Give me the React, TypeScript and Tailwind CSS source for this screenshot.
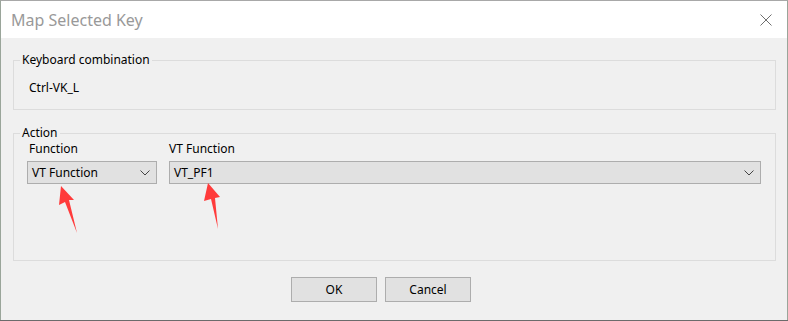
import React from "react";

const FONT = { fontFamily: '"Noto Sans", "Open Sans", sans-serif' };

const Chevron: React.FC = () => (
  <svg width="10" height="6" viewBox="0 0 10 6" className="shrink-0">
    <path d="M0.5 0.5 L5 5 L9.5 0.5" fill="none" stroke="#444" strokeWidth="1" />
  </svg>
);

const Select: React.FC<{ value: string; className: string }> = ({ value, className }) => (
  <div
    className={`h-[23px] flex items-center justify-between border border-[#adadad] bg-[#e1e1e1] pl-[4px] pr-[6px] text-[12px] text-black ${className}`}
  >
    <span>{value}</span>
    <Chevron />
  </div>
);

const Button: React.FC<{ label: string }> = ({ label }) => (
  <button className="w-[86px] h-[25px] border border-[#adadad] bg-[#e1e1e1] text-[12px] text-black">
    {label}
  </button>
);

const App: React.FC = () => {
  return (
    <div className="relative w-[788px] h-[321px] bg-[#6b6b6b] overflow-hidden" style={FONT}>
      <div className="flex flex-col w-[788px] h-[320px] border-x border-t border-x-[#9aa59a] border-t-[#a8a8a8] bg-[#f0f0f0]">
        {/* Title bar */}
        <div className="h-[37px] shrink-0 bg-white flex items-center justify-between pl-[10px] pr-[15px]">
          <span className="text-[16px] text-[#999999]">Map Selected Key</span>
          <svg width="12" height="12" viewBox="0 0 12 12">
            <path d="M0.5 0.5 L11.5 11.5 M11.5 0.5 L0.5 11.5" stroke="#6f6f6f" strokeWidth="1" />
          </svg>
        </div>

        {/* Body */}
        <div className="flex-1 flex flex-col pt-[14px] pl-[12px] pr-[11px] text-[12px] text-black">
          <fieldset className="border border-[#dcdcdc] pl-[15px] pt-[12px] pb-[13px]">
            <legend className="-ml-[9px] px-[2px] leading-[16px]">Keyboard combination</legend>
            <div className="leading-[16px]">Ctrl-VK_L</div>
          </fieldset>

          <fieldset className="mt-[15px] border border-[#dcdcdc] pl-[13px] pr-[14px] pb-[76px]">
            <legend className="-ml-[7px] px-[2px] leading-[16px]">Action</legend>
            <div className="flex gap-[12px]">
              <div className="flex flex-col gap-[4px]">
                <span className="pl-[2px] leading-[16px]">Function</span>
                <Select value="VT Function" className="w-[130px]" />
              </div>
              <div className="flex flex-col gap-[4px] flex-1">
                <span className="leading-[16px]">VT Function</span>
                <Select value="VT_PF1" className="w-full" />
              </div>
            </div>
          </fieldset>

          <div className="flex gap-[8px] pt-[16px] pl-[278px]">
            <Button label="OK" />
            <Button label="Cancel" />
          </div>
        </div>
      </div>

      {/* Annotation arrows */}
      <svg className="absolute left-0 top-0 pointer-events-none" width="788" height="321">
        <polygon points="61,186 74,200 69,200 77,233 65,202 59,205" fill="#ff3b3b" />
        <polygon points="208,183 220,197 215,198 218,229 211,199 204,201" fill="#ff3b3b" />
      </svg>
    </div>
  );
};

export default App;
